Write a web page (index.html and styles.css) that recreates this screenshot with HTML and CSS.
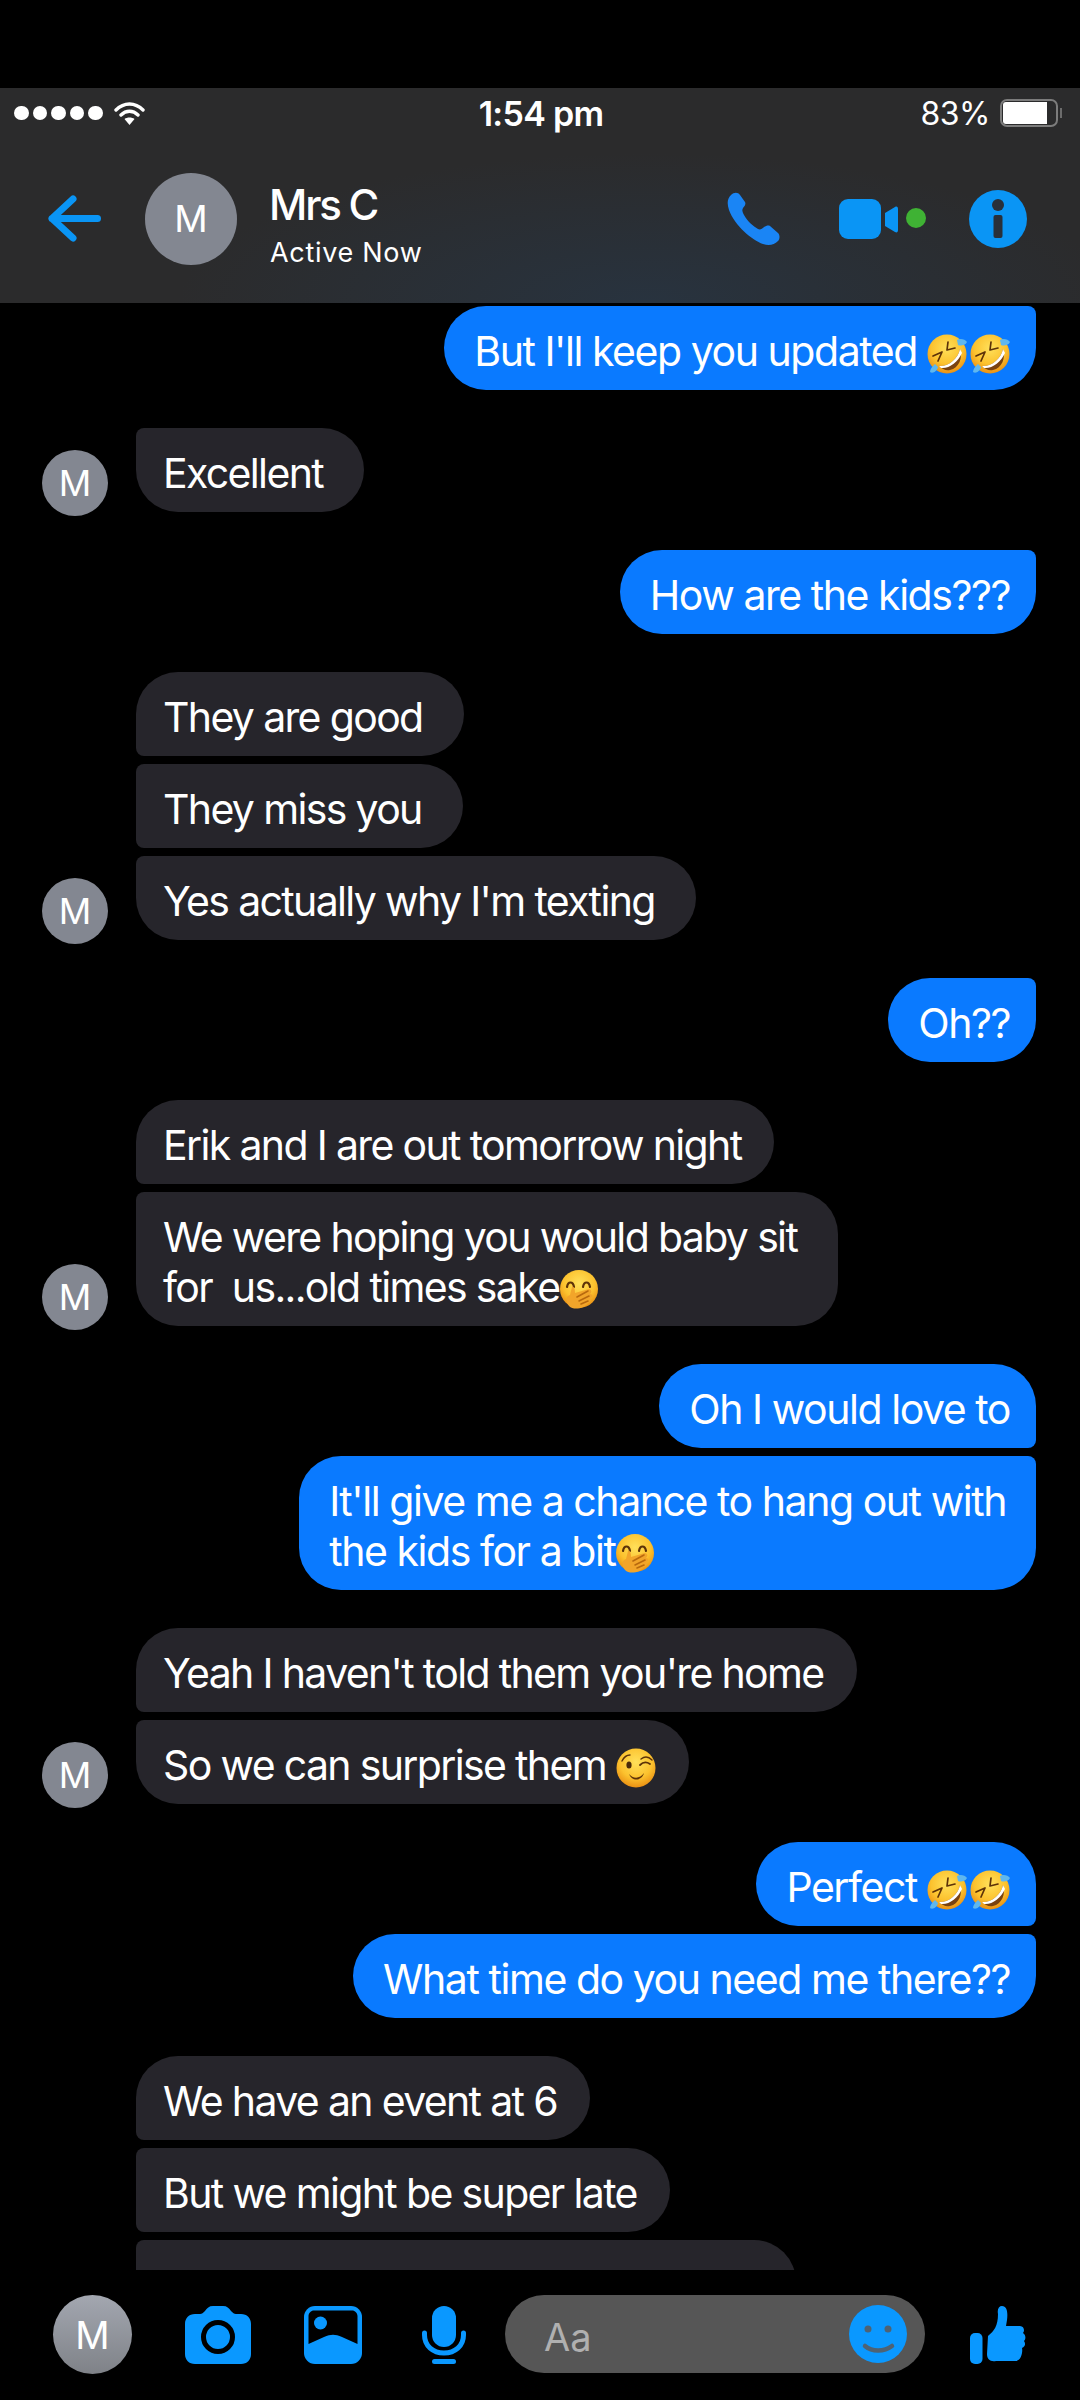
FILE: index.html
```html
<!DOCTYPE html>
<html>
<head>
    <title>Mrs C</title>
    <link rel="stylesheet" href="styles.css">
</head>
<body>
    <svg class="sprite" xmlns="http://www.w3.org/2000/svg">
        <defs>
            <radialGradient id="yellow" cx="50%" cy="35%" r="68%">
                <stop offset="0" stop-color="#ffe05a"/>
                <stop offset="0.6" stop-color="#fcc22e"/>
                <stop offset="1" stop-color="#e88a10"/>
            </radialGradient>
            <symbol id="rofl" viewBox="0 0 40 40">
                <circle cx="20" cy="20" r="19.500" fill="url(#yellow)"/>
                <path d="M6 22 L15 18 L11 27 M21 8 L20 16 L28 14" fill="none" stroke="#5d3208" stroke-width="1.7" stroke-linecap="round" stroke-linejoin="round"/>
                <path d="M12 32 C21 33 31 25 33 15 C36 24 32 34 23 36 C19 37 15 35 12 32Z" fill="#7a420f"/>
                <path d="M12 32 C21 33 31 25 33 15 L35 19 C31 28 22 35 14 34Z" fill="#fff"/>
                <path d="M30 6 C33 4 38 5 40 8 C38 12 33 12 31 11Z" fill="#5fb7ee"/>
                <path d="M8 30 C5 33 3 35 3 38 C6 40 10 37 11 33Z" fill="#5fb7ee"/>
            </symbol>
            <symbol id="shush" viewBox="0 0 40 40">
                <circle cx="20" cy="19" r="19" fill="url(#yellow)"/>
                <path d="M8 17 C9 11 14 11 15 17 M24 17 C25 11 30 11 31 17" fill="none" stroke="#5d3208" stroke-width="2.2" stroke-linecap="round"/>
                <path d="M10 36 C6 31 7 26 11 25 L13 17 C15 16 16 19 16 23 L30 19 C33 20 33 22 31 24 C34 24 34 27 31 28 C33 29 32 32 29 33 C26 38 15 41 10 36Z" fill="#f2a52a"/>
                <path d="M18 27 L29 21 M20 31 L30 26 M22 34 L29 31" fill="none" stroke="#b8690e" stroke-width="1.6" stroke-linecap="round"/>
            </symbol>
            <symbol id="wink" viewBox="0 0 40 40">
                <circle cx="20" cy="20" r="19.500" fill="url(#yellow)"/>
                <path d="M6 13 C8 9 11 7 14 7 M25 11 C29 8 33 9 36 12" fill="none" stroke="#5d3208" stroke-width="1.4" stroke-linecap="round"/>
                <ellipse cx="13" cy="17" rx="2.6" ry="3.6" fill="#4a2a0a"/>
                <path d="M24 17 C27 14 31 14 34 16" fill="none" stroke="#5d3208" stroke-width="1.8" stroke-linecap="round"/>
                <path d="M13 26 C17 31 24 31 28 25 C26 33 16 34 13 26Z" fill="#5d3208"/>
            </symbol>
        </defs>
    </svg>

    <header class="top-bar">
        <div class="status-bar">
            <div class="status-left">
                <span class="signal"><i></i><i></i><i></i><i></i><i></i></span>
                <svg class="wifi" viewBox="0 0 31 23">
                    <path d="M2 8 C10 0 21 0 29 8 M7 13 C12 8 19 8 24 13" fill="none" stroke="#fff" stroke-width="3.4" stroke-linecap="round"/>
                    <path d="M10.5 17 C13 15 18 15 20.5 17 L15.5 23Z" fill="#fff"/>
                </svg>
            </div>
            <div class="clock">1:54 pm</div>
            <div class="status-right">
                <span class="percent">83%</span>
                <span class="battery"><i></i></span>
                <span class="battery-nub"></span>
            </div>
        </div>
        <div class="nav-bar">
            <svg class="back" viewBox="0 0 53 47">
                <path d="M49.500 23.500 H4 M25 4 L4 23.500 L25 43" fill="none" stroke="#0a95f5" stroke-width="7" stroke-linecap="round" stroke-linejoin="round"/>
            </svg>
            <div class="avatar avatar-large">M</div>
            <div class="contact">
                <div class="contact-name">Mrs C</div>
                <div class="contact-state">Active Now</div>
            </div>
            <div class="nav-actions">
                <svg class="phone" viewBox="0 0 53 53">
                    <path d="M4 3 C7 0 11 0 13 3 L18 10 C19 12 18 14 16 16 C15 18 15 19 17 23 C21 30 26 34 31 37 C33 38 35 37 37 35 C39 34 41 33 43 34 L51 41 C53 43 53 47 51 49 C47 53 42 54 36 52 C25 48 8 34 2 18 C0 12 0 7 4 3Z" fill="#1a85f5"/>
                </svg>
                <svg class="video" viewBox="0 0 87 40">
                    <rect width="42" height="40" rx="9" fill="#0a95f5"/>
                    <path d="M46 14 L56 8 C58 7 59 8 59 10 V31 C59 33 58 34 56 33 L46 27 C46 23 46 18 46 14Z" fill="#0a95f5"/>
                    <circle cx="77" cy="19" r="10" fill="#3fb234"/>
                </svg>
                <svg class="info" viewBox="0 0 58 58">
                    <circle cx="29" cy="29" r="29" fill="#0a95f5"/>
                    <circle cx="29" cy="15" r="6" fill="#29303a"/>
                    <rect x="24.500" y="25" width="9" height="23" rx="2" fill="#29303a"/>
                </svg>
            </div>
        </div>
    </header>

    <main class="messages">
        <div class="group me">
            <div class="stack">
                <div class="bubble sent">But I'll keep you updated <svg class="emoji"><use href="#rofl"/></svg><svg class="emoji"><use href="#rofl"/></svg></div>
            </div>
        </div>
        <div class="group">
            <div class="avatar avatar-small">M</div>
            <div class="stack">
                <div class="bubble received loose">Excellent</div>
            </div>
        </div>
        <div class="group me">
            <div class="stack">
                <div class="bubble sent">How are the kids???</div>
            </div>
        </div>
        <div class="group">
            <div class="avatar avatar-small">M</div>
            <div class="stack">
                <div class="bubble received first loose">They are good</div>
                <div class="bubble received middle loose">They miss you</div>
                <div class="bubble received loose">Yes actually why I'm texting</div>
            </div>
        </div>
        <div class="group me">
            <div class="stack">
                <div class="bubble sent">Oh??</div>
            </div>
        </div>
        <div class="group">
            <div class="avatar avatar-small">M</div>
            <div class="stack">
                <div class="bubble received first">Erik and I are out tomorrow night</div>
                <div class="bubble received loose">We were hoping you would baby sit<br>for &nbsp;us...old times sake<svg class="emoji"><use href="#shush"/></svg></div>
            </div>
        </div>
        <div class="group me">
            <div class="stack">
                <div class="bubble sent first">Oh I would love to</div>
                <div class="bubble sent loose">It'll give me a chance to hang out with<br>the kids for a bit<svg class="emoji"><use href="#shush"/></svg></div>
            </div>
        </div>
        <div class="group">
            <div class="avatar avatar-small">M</div>
            <div class="stack">
                <div class="bubble received first">Yeah I haven't told them you're home</div>
                <div class="bubble received">So we can surprise them <svg class="emoji"><use href="#wink"/></svg></div>
            </div>
        </div>
        <div class="group me">
            <div class="stack">
                <div class="bubble sent first">Perfect <svg class="emoji"><use href="#rofl"/></svg><svg class="emoji"><use href="#rofl"/></svg></div>
                <div class="bubble sent">What time do you need me there??</div>
            </div>
        </div>
        <div class="group no-avatar">
            <div class="stack">
                <div class="bubble received first">We have an event at 6</div>
                <div class="bubble received middle">But we might be super late</div>
                <div class="bubble received">So can you come over as soon as</div>
            </div>
        </div>
    </main>

    <footer class="composer">
        <div class="avatar avatar-me">M</div>
        <svg class="camera" viewBox="0 0 66 58">
            <path d="M10 8 H15 C17 8 18 7 20 5 C22 2 24 0 28 0 H38 C42 0 44 2 46 5 C48 7 49 8 51 8 H56 C62 8 66 12 66 18 V48 C66 54 62 58 56 58 H10 C4 58 0 54 0 48 V18 C0 12 4 8 10 8Z" fill="#0a98ff"/>
            <circle cx="33" cy="31" r="14.500" fill="none" stroke="#000" stroke-width="5"/>
        </svg>
        <svg class="picture" viewBox="0 0 58 58">
            <rect width="58" height="58" rx="11" fill="#0a98ff"/>
            <path d="M4.500 10 C4.500 7 7 4.500 10 4.500 H48 C51 4.500 53.500 7 53.500 10 V38 L38 31 C31 28 27 28 20 31 L4.500 38Z" fill="#000"/>
            <circle cx="16.500" cy="17" r="6.500" fill="#0a98ff"/>
        </svg>
        <svg class="mic" viewBox="0 0 44 58">
            <rect x="10" width="24" height="41" rx="12" fill="#0a98ff"/>
            <path d="M2.500 27 V29 C2.500 40 11 47 22 47 C33 47 41.500 40 41.500 29 V27" fill="none" stroke="#0a98ff" stroke-width="5" stroke-linecap="round"/>
            <rect x="10" y="53" width="24" height="5" rx="2.500" fill="#0a98ff"/>
        </svg>
        <div class="input">
            <span class="placeholder">Aa</span>
            <svg class="smile" viewBox="0 0 58 58">
                <circle cx="29" cy="29" r="29" fill="#0a98ff"/>
                <circle cx="19" cy="24" r="3.500" fill="#4f6273"/>
                <circle cx="39" cy="24" r="3.500" fill="#4f6273"/>
                <path d="M16 41 C23 47 35 47 43 41" fill="none" stroke="#4f6273" stroke-width="4.500" stroke-linecap="round"/>
            </svg>
        </div>
        <svg class="thumb" viewBox="0 0 57 58">
            <rect y="27" width="12.500" height="31" rx="5" fill="#0a98ff"/>
            <path d="M18 30 C24 25 28 20 28 8 C27 3 29 0 32 0 C37 0 38 6 37 14 L36 20 H50 C54 20 55 25 53 27 C56 29 56 33 54 35 C56 38 55 41 52 42 C53 46 51 55 46 55 H26 C20 56 17 53 17 48Z" fill="#0a98ff"/>
        </svg>
    </footer>
</body>
</html>
```

FILE: styles.css
```css
body {
    margin: 0;
    width: 1080px;
    height: 2400px;
    overflow: hidden;
    background-color: #000;
    color: #fff;
    font-family: Inter, "Liberation Sans", sans-serif;
    display: flex;
    flex-direction: column;
}

svg {
    display: block;
    flex-shrink: 0;
}

.sprite {
    width: 0;
    height: 0;
}

.top-bar {
    margin-top: 88px;
    height: 215px;
    flex-shrink: 0;
    background: radial-gradient(ellipse 470px 150px at 60% 100%, #28333f, #2b2b2c);
}

.status-bar {
    height: 50px;
    padding: 0 18px 0 14px;
    display: grid;
    grid-template-columns: 1fr auto 1fr;
    align-items: center;
}

.status-left,
.status-right {
    display: flex;
    align-items: center;
}

.status-right {
    justify-content: flex-end;
}

.signal {
    display: flex;
    gap: 4px;
}

.signal i {
    width: 14.5px;
    height: 14.5px;
    border-radius: 50%;
    background-color: #fff;
}

.wifi {
    width: 31px;
    height: 23px;
    margin-left: 11px;
}

.clock {
    font-size: 34px;
    font-weight: 600;
    letter-spacing: -0.7px;
    padding-left: 6px;
}

.percent {
    font-size: 32px;
    margin-right: 10px;
    letter-spacing: -0.5px;
}

.battery {
    width: 58px;
    height: 28px;
    box-sizing: border-box;
    border: 2px solid #7c7c7c;
    border-radius: 7px;
    padding: 1px;
    display: flex;
}

.battery i {
    width: 44px;
    border-radius: 3px 0 0 3px;
    background-color: #fff;
}

.battery-nub {
    width: 2px;
    height: 10px;
    margin-left: 2px;
    background-color: #6c6c6c;
}

.nav-bar {
    height: 161px;
    padding: 0 53px 4px 48px;
    display: flex;
    align-items: center;
}

.back {
    width: 53px;
    height: 47px;
    margin-right: 44px;
}

.avatar {
    border-radius: 50%;
    background-color: #838791;
    display: flex;
    align-items: center;
    justify-content: center;
    flex-shrink: 0;
}

.avatar-large {
    width: 92px;
    height: 92px;
    font-size: 37px;
    margin-right: 32px;
}

.contact {
    margin-top: 13px;
}

.contact-name {
    font-size: 42px;
    font-weight: 500;
    line-height: 50px;
    letter-spacing: -2.2px;
}

.contact-state {
    font-size: 27px;
    line-height: 36px;
    letter-spacing: 0.7px;
    margin-top: 5px;
    margin-left: 1px;
}

.nav-actions {
    margin-left: auto;
    display: flex;
    align-items: center;
}

.phone {
    width: 53px;
    height: 53px;
    margin-right: 59px;
}

.video {
    width: 87px;
    height: 40px;
    margin-right: 43px;
}

.info {
    width: 58px;
    height: 58px;
}

.messages {
    height: 1967px;
    flex-shrink: 0;
    box-sizing: border-box;
    padding-top: 3px;
    overflow: hidden;
    display: flex;
    flex-direction: column;
    gap: 38px;
}

.group {
    display: flex;
    align-items: flex-end;
    padding-left: 42px;
    flex-shrink: 0;
}

.group.me {
    justify-content: flex-end;
    padding-right: 44px;
}

.group.no-avatar {
    padding-left: 108px;
}

.stack {
    display: flex;
    flex-direction: column;
    gap: 8px;
}

.me .stack {
    align-items: flex-end;
}

.group:not(.me) .stack {
    align-items: flex-start;
    margin-left: 28px;
}

.avatar-small {
    width: 66px;
    height: 66px;
    font-size: 36px;
    margin-bottom: -4px;
}

.bubble {
    font-size: 41px;
    line-height: 50px;
    letter-spacing: -1.65px;
    white-space: nowrap;
}

.sent {
    background-color: #0a7aff;
    padding: 20px 26px 14px 30px;
    border-radius: 42px 8px 42px 42px;
    letter-spacing: -1.45px;
}

.sent.loose {
    padding-right: 30px;
}

.sent.first {
    border-radius: 42px 42px 8px 42px;
}

.received {
    background-color: #26252b;
    padding: 20px 33px 14px 27px;
    border-radius: 8px 42px 42px 42px;
}

.received.loose {
    padding-right: 41px;
}

.received.first {
    border-radius: 42px 42px 42px 8px;
}

.received.middle {
    border-radius: 8px 42px 42px 8px;
}

.emoji {
    display: inline-block;
    width: 40px;
    height: 40px;
    vertical-align: -8px;
}

.emoji + .emoji {
    margin-left: 3px;
}

.composer {
    flex: 1;
    box-sizing: border-box;
    padding: 25px 0 0 53px;
    background-color: #000;
    display: flex;
    align-items: flex-start;
}

.avatar-me {
    width: 79px;
    height: 79px;
    font-size: 38px;
    background: linear-gradient(#a3a7b0, #7f8288);
    margin-right: 53px;
}

.camera {
    width: 66px;
    height: 58px;
    margin: 11px 53px 0 0;
}

.picture {
    width: 58px;
    height: 58px;
    margin: 11px 60px 0 0;
}

.mic {
    width: 44px;
    height: 58px;
    margin: 11px 39px 0 0;
}

.input {
    width: 420px;
    height: 78px;
    box-sizing: border-box;
    padding: 0 18px 0 39px;
    border-radius: 39px;
    background-color: #565656;
    display: flex;
    align-items: center;
    justify-content: space-between;
}

.placeholder {
    font-size: 38px;
    color: #b0b0b0;
    padding-top: 6px;
}

.smile {
    width: 58px;
    height: 58px;
}

.thumb {
    width: 57px;
    height: 58px;
    margin: 11px 0 0 45px;
}
```
